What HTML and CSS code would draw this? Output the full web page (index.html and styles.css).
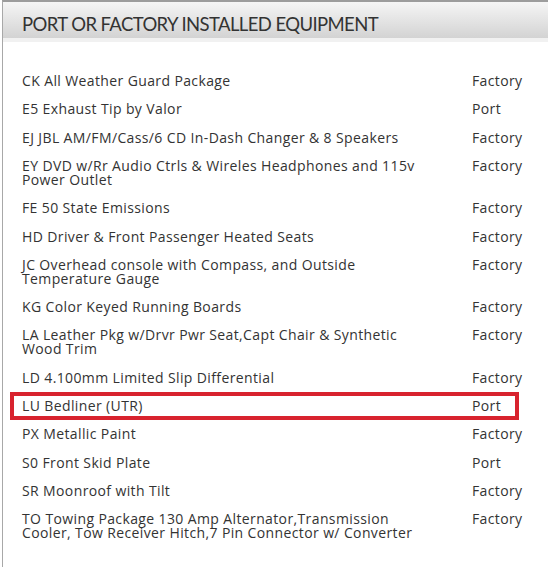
FILE: index.html
```html
<!DOCTYPE html>
<html lang="en">
<head>
    <meta charset="UTF-8">
    <meta name="viewport" content="width=device-width, initial-scale=1.0">
    <title>Port or Factory Installed Equipment</title>
    <link rel="stylesheet" href="styles.css">
</head>
<body>
    <div class="panel">
        <div class="panel-head">
            <h2>PORT OR FACTORY INSTALLED EQUIPMENT</h2>
        </div>

        <div class="equip-list">
            <div class="row"><span class="name">CK All Weather Guard Package</span><span class="src">Factory</span></div>
            <div class="row"><span class="name">E5 Exhaust Tip by Valor</span><span class="src">Port</span></div>
            <div class="row"><span class="name">EJ JBL AM/FM/Cass/6 CD In-Dash Changer &amp; 8 Speakers</span><span class="src">Factory</span></div>
            <div class="row"><span class="name">EY DVD w/Rr Audio Ctrls &amp; Wireles Headphones and 115v Power Outlet</span><span class="src">Factory</span></div>
            <div class="row"><span class="name">FE 50 State Emissions</span><span class="src">Factory</span></div>
            <div class="row"><span class="name">HD Driver &amp; Front Passenger Heated Seats</span><span class="src">Factory</span></div>
            <div class="row"><span class="name">JC Overhead console with Compass, and Outside Temperature Gauge</span><span class="src">Factory</span></div>
            <div class="row"><span class="name">KG Color Keyed Running Boards</span><span class="src">Factory</span></div>
            <div class="row"><span class="name">LA Leather Pkg w/Drvr Pwr Seat,Capt Chair &amp; Synthetic Wood Trim</span><span class="src">Factory</span></div>
            <div class="row"><span class="name">LD 4.100mm Limited Slip Differential</span><span class="src">Factory</span></div>
            <div class="row flagged"><span class="name">LU Bedliner (UTR)</span><span class="src">Port</span></div>
            <div class="row"><span class="name">PX Metallic Paint</span><span class="src">Factory</span></div>
            <div class="row"><span class="name">S0 Front Skid Plate</span><span class="src">Port</span></div>
            <div class="row"><span class="name">SR Moonroof with Tilt</span><span class="src">Factory</span></div>
            <div class="row"><span class="name">TO Towing Package 130 Amp Alternator,Transmission Cooler, Tow Receiver Hitch,7 Pin Connector w/ Converter</span><span class="src">Factory</span></div>
        </div>
    </div>
</body>
</html>
```

FILE: styles.css
```css
body {
    margin: 0;
    background-color: white;
    font-family: 'Open Sans', 'Liberation Sans', sans-serif;
    color: #333;
}
.panel {
    margin-left: 2px;
    height: 565px;
    border-top: 2px solid #9c9c9c;
    border-left: 1px solid #a8a8a8;
    overflow: hidden;
}
.panel-head {
    height: 36px;
    padding-left: 19px;
    background: linear-gradient(to bottom, #f5f5f5, #d3d3d3);
    border-bottom: 4px solid #f1f1f1;
}
.panel-head h2 {
    margin: 0;
    font-family: Lato, 'Open Sans', sans-serif;
    font-weight: normal;
    font-size: 18.5px;
    letter-spacing: -0.6px;
    line-height: 44px;
    height: 36px;
    color: #333;
}
.equip-list {
    padding-top: 25px;
    margin-left: 7px;
    width: 509px;
}
.row {
    display: grid;
    grid-template-columns: 406px 1fr;
    column-gap: 44px;
    padding: 7.15px 0 7.15px 12px;
    font-size: 14px;
    line-height: 14px;
    letter-spacing: 0.38px;
}
.row .src {
    white-space: nowrap;
}
.row.flagged {
    outline: 4px solid #d8232e;
    outline-offset: -4px;
}
```
